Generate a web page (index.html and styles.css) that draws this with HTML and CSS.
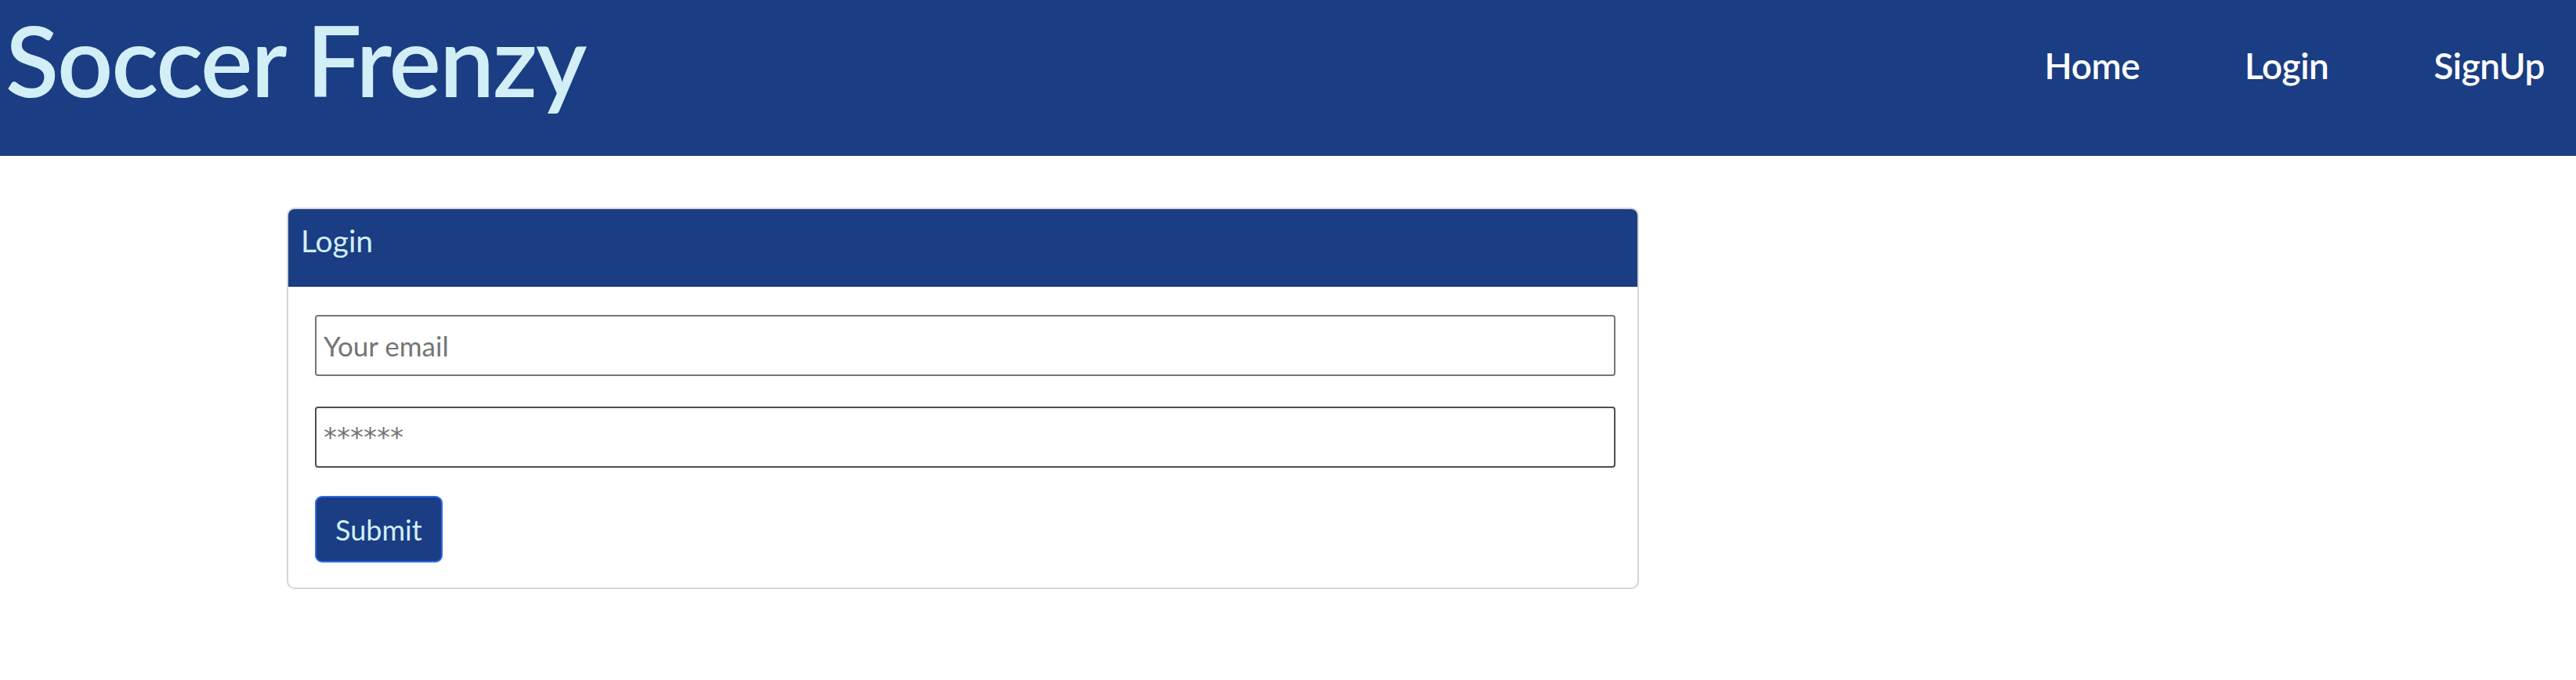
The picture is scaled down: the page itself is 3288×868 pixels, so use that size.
FILE: index.html
```html
<!DOCTYPE html>
<html lang="en">
<head>
<meta charset="utf-8">
<title>Soccer Frenzy</title>
<link rel="stylesheet" href="styles.css">
</head>
<body>
<header class="topbar">
  <h1 class="brand">Soccer Frenzy</h1>
  <nav class="nav">
    <a class="nav-link" href="#">Home</a>
    <a class="nav-link" href="#">Login</a>
    <a class="nav-link" href="#">SignUp</a>
  </nav>
</header>
<main class="content">
  <section class="card">
    <div class="card-header">Login</div>
    <form class="card-body">
      <input class="field" type="email" placeholder="Your email">
      <input class="field field-password" type="password" placeholder="******">
      <button class="btn" type="button">Submit</button>
    </form>
  </section>
</main>
</body>
</html>
```
FILE: styles.css
```css
* { box-sizing: border-box; }

body {
  margin: 0;
  font-family: Lato, "Open Sans", sans-serif;
  background: #ffffff;
}

.topbar {
  height: 199px;
  background: #1a3d84;
  display: flex;
  justify-content: space-between;
  align-items: flex-start;
  padding: 0 40px 0 7px;
}

.brand {
  margin: 0;
  padding-top: 14px;
  font-size: 125px;
  line-height: 1;
  font-weight: 600;
  letter-spacing: -2px;
  color: #d2eff7;
}

.nav {
  display: flex;
  gap: 134px;
  padding-top: 61px;
}

.nav-link {
  font-size: 46px;
  line-height: 1;
  font-weight: 600;
  letter-spacing: -0.5px;
  color: #ffffff;
  text-decoration: none;
}

.content {
  padding: 66px 0 0 366px;
}

.card {
  width: 1726px;
  border: 2px solid #d6d6d6;
  border-radius: 10px;
  overflow: hidden;
}

.card-header {
  height: 99px;
  background: #1a3d84;
  border-bottom: 1px solid #142f68;
  color: #d2eff7;
  font-size: 39px;
  line-height: 1;
  padding: 21px 16px 0;
}

.card-body {
  display: flex;
  flex-direction: column;
  align-items: flex-start;
  padding: 36px 28px 32px 34px;
}

.field {
  width: 1660px;
  height: 78px;
  border: 2px solid #767676;
  border-radius: 4px;
  padding: 0 9px;
  font-family: Lato, "Open Sans", sans-serif;
  font-size: 35px;
  color: #333333;
  margin-bottom: 39px;
}

.field::placeholder { color: #757575; }

.field-password {
  border-color: #4f4f4f;
  margin-bottom: 36px;
  font-family: "DejaVu Sans", sans-serif;
  font-size: 34px;
}

.btn {
  height: 85px;
  padding: 0 24px;
  background: #1a3d84;
  border: 2px solid #2e6be6;
  border-radius: 9px;
  color: #d2eff7;
  font-family: Lato, "Open Sans", sans-serif;
  font-size: 36px;
}
```
